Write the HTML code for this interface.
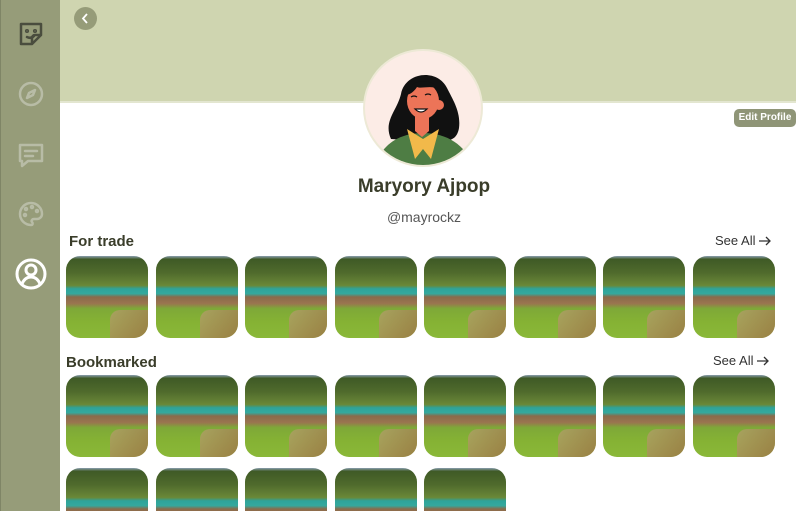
<!DOCTYPE html>
<html style="width:796px;height:511px;overflow:hidden"><head><style>
html,body{margin:0;width:796px;height:511px;overflow:hidden;background:#fff;font-family:"Liberation Sans",sans-serif}
#w{position:relative;width:796px;height:511px;overflow:hidden}
.side{position:absolute;left:0;top:0;width:60px;height:511px;background:#969c79;border-left:1px solid #7f8566;box-sizing:border-box}
.hdr{position:absolute;left:60px;top:0;width:736px;height:101px;background:#cfd5b0;border-bottom:2px solid #e3e6d0}
.back{position:absolute;left:74px;top:7px;width:23px;height:23px;border-radius:50%;background:#969c79}
.av{position:absolute;left:363px;top:49px;width:120px;height:118px;border-radius:50%;background:#fcece6;border:2px solid #ede9d6;overflow:hidden;box-sizing:border-box}
.name{position:absolute;width:796px;left:26px;text-align:center;top:176px;font-size:19px;font-weight:bold;color:#3a3d2a}
.handle{position:absolute;left:26px;width:796px;text-align:center;top:209px;font-size:14px;color:#555}
.edit{position:absolute;left:734px;top:109px;width:62px;height:18px;border-radius:5px;background:#8f9577;color:#fff;font-size:10px;font-weight:bold;text-align:center;line-height:18px}
.h{position:absolute;font-size:15px;font-weight:bold;color:#3a3d2a}
.see{position:absolute;font-size:13px;color:#333}
.see svg{vertical-align:-2px;margin-left:3px}
.t{position:absolute;width:82px;height:82px;border-radius:14px;overflow:hidden;background:
linear-gradient(180deg,#8a9fb0 0,#3f5a26 4%,#4f6a2c 20%,#6a8838 36%,#2ea39a 40%,#35a89d 46%,#8a6a4a 50%,#9a7550 58%,#7ea838 64%,#85b234 80%,#8ab838 100%) 0 0/82px 82px no-repeat}
.t:after{content:"";position:absolute;left:44px;top:54px;width:38px;height:28px;background:linear-gradient(135deg,#b8a070,#a06848);border-radius:10px 0 0 0;opacity:.7}
</style></head><body><div id="w">
<div class="side">
<svg width="60" height="300" style="position:absolute;left:0;top:0" fill="none" stroke-linecap="round" stroke-linejoin="round">
<g stroke="#4a4d3e" stroke-width="2.5"><path d="M20 24h20v11l-9 9h-11z M31 44v-6a3 3 0 0 1 3-3h6"/><path d="M26 37q4 2 7 -1"/><circle cx="26" cy="31" r="0.8"/><circle cx="34" cy="31" r="0.8"/></g>
<g stroke="#b8bca6" stroke-width="2.5"><circle cx="30" cy="94" r="11"/><path d="M34 90l-6 3-2 5 6-3z"/>
<path d="M19 145h22v16H27l-6 5v-5h-2z M24 151h12 M24 156h8"/>
<path d="M30 203a11 11 0 1 0 0 22c2 0 2-2 1-3s0-3 2-3h3a5 5 0 0 0 5-5c0-6-5-11-11-11z"/><circle cx="25" cy="209" r="1"/><circle cx="31" cy="207" r="1"/><circle cx="36" cy="211" r="1"/><circle cx="24" cy="215" r="1"/></g>
<g stroke="#fff" stroke-width="3"><circle cx="30" cy="274" r="14"/><circle cx="30" cy="270" r="5"/><path d="M21 284c2-5 5-7 9-7s7 2 9 7"/></g>
</svg></div>
<div class="hdr"></div>
<div class="back"><svg width="23" height="23"><path d="M13 7l-4 4.5 4 4.5" stroke="#fff" stroke-width="1.8" fill="none"/></svg></div>
<div class="av"><svg width="118" height="118" viewBox="0 0 118 118">
<path d="M26 88c-8-18 6-28 10-45 4-22 36-26 46-6 6 12 14 24 12 40-2 12-10 14-22 12H40z" fill="#111"/>
<path d="M10 118c4-22 22-36 48-36s44 14 52 36z" fill="#4e7d44"/>
<path d="M42 78l16 10 16-10 -8 30-8-10-8 10z" fill="#f2b94a"/>
<path d="M50 58h14v22l-7 6-7-6z" fill="#ec7458"/>
<ellipse cx="58" cy="50" rx="16" ry="18" fill="#ec7458"/>
<circle cx="74" cy="54" r="5" fill="#ec7458"/>
<path d="M40 44c4-16 26-18 34-6-8-4-18 0-22-2-4 6-8 8-12 8z" fill="#111"/>
<path d="M50 58q6 6 12 0z" fill="#fff" stroke="#111" stroke-width="1.2"/>
<path d="M46 46q3-2 6 0 M60 44q3-2 6 0" stroke="#111" stroke-width="1.3" fill="none"/>
</svg></div>
<div class="name">Maryory Ajpop</div>
<div class="handle">@mayrockz</div>
<div class="edit">Edit Profile</div>
<div class="h" style="left:69px;top:233px">For trade</div>
<div class="see" style="left:715px;top:233px">See All<svg width="14" height="12"><path d="M1 6h11M8 2l4 4-4 4" stroke="#333" stroke-width="1.3" fill="none"/></svg></div>
<div class="h" style="left:66px;top:354px">Bookmarked</div>
<div class="see" style="left:713px;top:353px">See All<svg width="14" height="12"><path d="M1 6h11M8 2l4 4-4 4" stroke="#333" stroke-width="1.3" fill="none"/></svg></div>
<div class="t" style="left:66px;top:256px"></div><div class="t" style="left:156px;top:256px"></div><div class="t" style="left:245px;top:256px"></div><div class="t" style="left:335px;top:256px"></div><div class="t" style="left:424px;top:256px"></div><div class="t" style="left:514px;top:256px"></div><div class="t" style="left:603px;top:256px"></div><div class="t" style="left:693px;top:256px"></div>
<div class="t" style="left:66px;top:375px"></div><div class="t" style="left:156px;top:375px"></div><div class="t" style="left:245px;top:375px"></div><div class="t" style="left:335px;top:375px"></div><div class="t" style="left:424px;top:375px"></div><div class="t" style="left:514px;top:375px"></div><div class="t" style="left:603px;top:375px"></div><div class="t" style="left:693px;top:375px"></div>
<div class="t" style="left:66px;top:468px;height:43px;border-radius:14px 14px 0 0"></div><div class="t" style="left:156px;top:468px;height:43px;border-radius:14px 14px 0 0"></div><div class="t" style="left:245px;top:468px;height:43px;border-radius:14px 14px 0 0"></div><div class="t" style="left:335px;top:468px;height:43px;border-radius:14px 14px 0 0"></div><div class="t" style="left:424px;top:468px;height:43px;border-radius:14px 14px 0 0"></div>
</div></body></html>
